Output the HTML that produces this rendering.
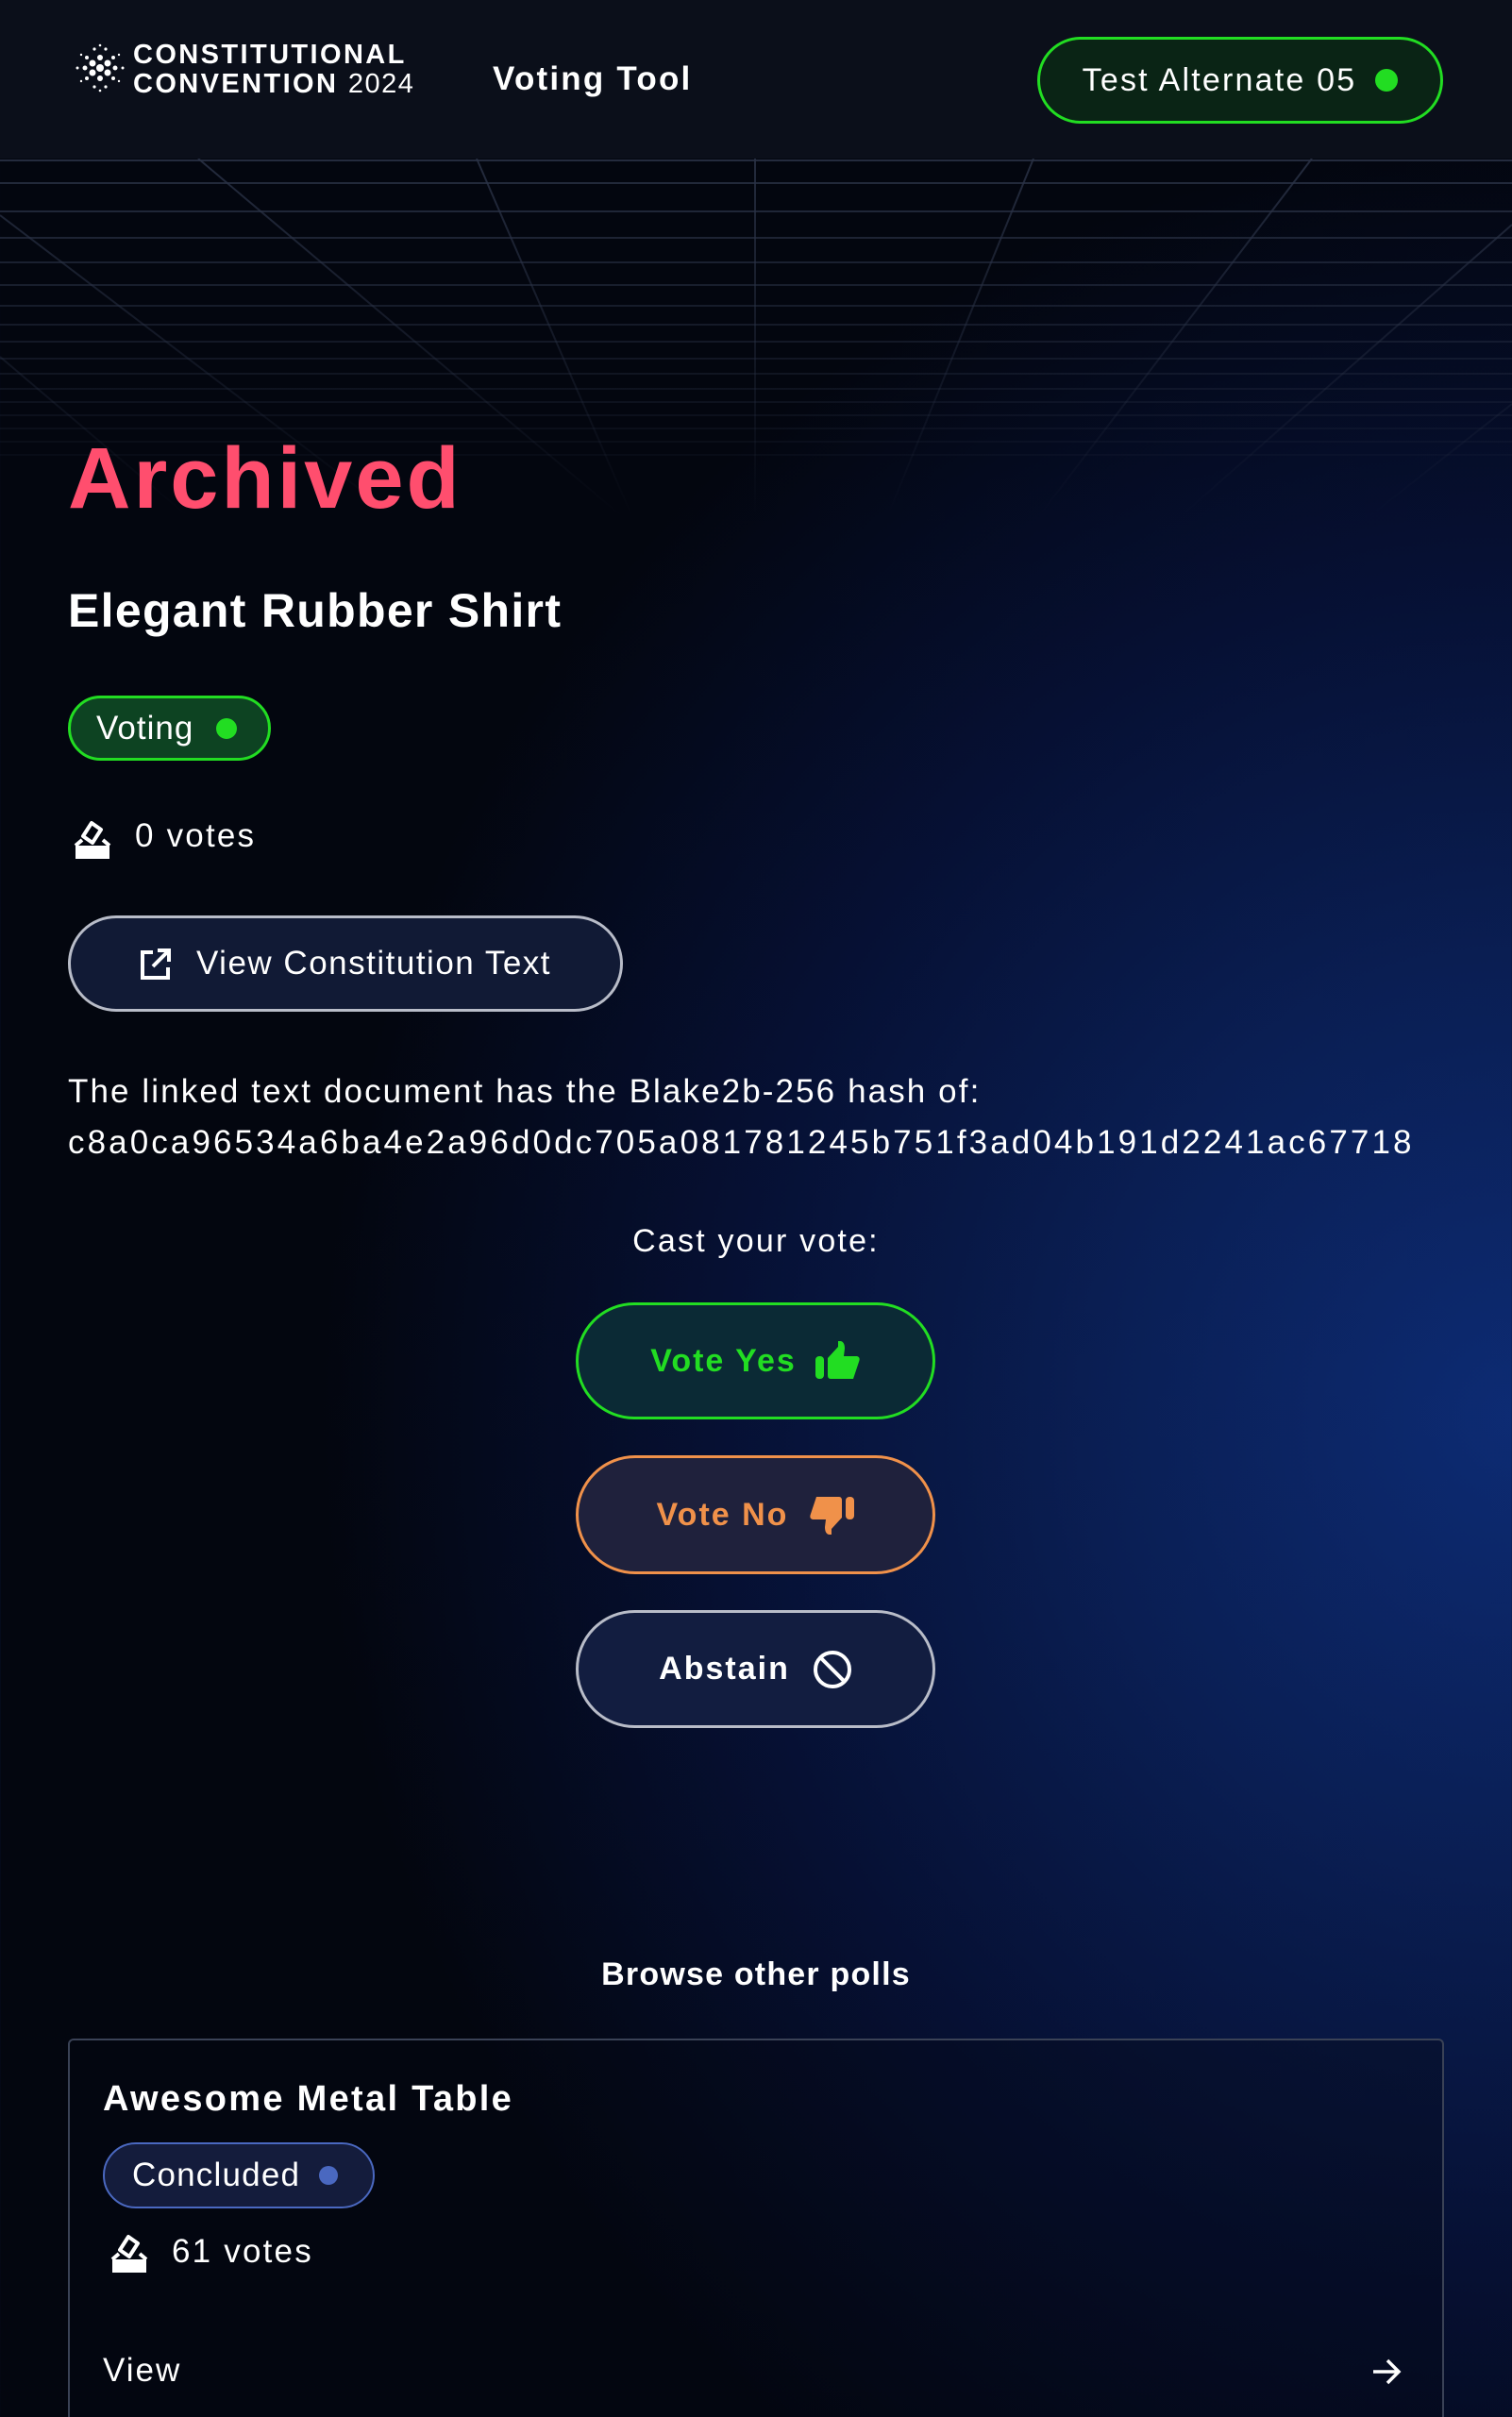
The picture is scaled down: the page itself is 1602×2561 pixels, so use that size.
<!DOCTYPE html>
<html><head><meta charset="utf-8">
<style>
*{margin:0;padding:0;box-sizing:border-box}
html,body{width:1602px;height:2561px;overflow:hidden}
body{font-family:"Liberation Sans",sans-serif;color:#fff;position:relative;
background:radial-gradient(ellipse 1400px 1500px at 1602px 1500px,#0d2b73 0%,#0a1f55 30%,#061033 60%,#03060f 90%),#03060f;}
.hdr{position:absolute;left:0;top:0;width:1602px;height:168px;background:#0b0f1a;}
.grid{position:absolute;left:0;top:168px;width:1602px;height:380px;}
.abs{position:absolute}
.pill{position:absolute;border-radius:999px;display:flex;align-items:center;justify-content:center}
</style></head><body>
<div class="hdr"></div>
<svg class="grid" width="1602" height="380" viewBox="0 0 1602 380">
<defs><linearGradient id="fg" gradientUnits="userSpaceOnUse" x1="0" y1="0" x2="0" y2="380"><stop offset="0" stop-color="#2a3246" stop-opacity=".85"/><stop offset="0.85" stop-color="#2a3246" stop-opacity="0.12"/><stop offset="1" stop-color="#2a3246" stop-opacity="0"/></linearGradient></defs>
<g stroke="url(#fg)" stroke-width="2" fill="none">
<line x1="0" y1="2" x2="1602" y2="2"/><line x1="0" y1="26" x2="1602" y2="26"/><line x1="0" y1="56" x2="1602" y2="56"/><line x1="0" y1="84" x2="1602" y2="84"/><line x1="0" y1="110" x2="1602" y2="110"/><line x1="0" y1="134" x2="1602" y2="134"/><line x1="0" y1="156" x2="1602" y2="156"/><line x1="0" y1="176" x2="1602" y2="176"/><line x1="0" y1="194" x2="1602" y2="194"/><line x1="0" y1="212" x2="1602" y2="212"/><line x1="0" y1="228" x2="1602" y2="228"/><line x1="0" y1="244" x2="1602" y2="244"/><line x1="0" y1="258" x2="1602" y2="258"/><line x1="0" y1="272" x2="1602" y2="272"/><line x1="0" y1="286" x2="1602" y2="286"/><line x1="0" y1="300" x2="1602" y2="300"/><line x1="0" y1="314" x2="1602" y2="314"/>
<line x1="210" y1="0" x2="660" y2="380"/><line x1="505" y1="0" x2="670" y2="380"/><line x1="800" y1="0" x2="800" y2="380"/><line x1="1095" y1="0" x2="940" y2="380"/><line x1="1390" y1="0" x2="1100" y2="380"/><line x1="1602" y1="70" x2="1250" y2="380"/><line x1="0" y1="60" x2="420" y2="380"/><line x1="0" y1="210" x2="200" y2="380"/><line x1="1602" y1="260" x2="1450" y2="380"/>
</g></svg>
<svg class="abs" style="left:78px;top:44px" width="56" height="56" viewBox="0 0 56 56" fill="#fff">
<circle cx="28" cy="28" r="4"/><circle cx="20" cy="23" r="3.5"/><circle cx="36" cy="23" r="3.5"/><circle cx="20" cy="33" r="3.5"/><circle cx="36" cy="33" r="3.5"/><circle cx="28" cy="17" r="3"/><circle cx="28" cy="39" r="3"/><circle cx="12" cy="28" r="2.5"/><circle cx="44" cy="28" r="2.5"/><circle cx="14" cy="17" r="2"/><circle cx="42" cy="17" r="2"/><circle cx="14" cy="39" r="2"/><circle cx="42" cy="39" r="2"/><circle cx="22" cy="8" r="1.6"/><circle cx="34" cy="8" r="1.6"/><circle cx="22" cy="48" r="1.6"/><circle cx="34" cy="48" r="1.6"/><circle cx="4" cy="28" r="1.5"/><circle cx="52" cy="28" r="1.5"/><circle cx="28" cy="4" r="1.3"/><circle cx="28" cy="52" r="1.3"/><circle cx="8" cy="14" r="1.2"/><circle cx="48" cy="14" r="1.2"/><circle cx="8" cy="42" r="1.2"/><circle cx="48" cy="42" r="1.2"/>
</svg>
<div class="abs" style="left:141px;top:43px;font-size:29px;line-height:31px;font-weight:bold;letter-spacing:2.4px">CONSTITUTIONAL<br>CONVENTION <span style="font-weight:normal;letter-spacing:1.5px">2024</span></div>
<div class="abs" style="left:522px;top:64px;font-size:35px;font-weight:bold;letter-spacing:2.2px">Voting Tool</div>
<div class="pill" style="left:1099px;top:39px;width:430px;height:92px;border:3px solid #22dd22;background:#0a2415;font-size:34px;letter-spacing:2.2px">Test Alternate 05<span style="display:inline-block;width:24px;height:24px;border-radius:50%;background:#22dd22;margin-left:20px"></span></div>

<div class="abs" style="left:72px;top:455px;font-size:92px;font-weight:bold;color:#ff4e6e;letter-spacing:3px">Archived</div>
<div class="abs" style="left:72px;top:618px;font-size:50px;font-weight:bold;letter-spacing:1.3px">Elegant Rubber Shirt</div>
<div class="pill" style="left:72px;top:737px;width:215px;height:69px;border:3px solid #22dd22;background:#0d4322;font-size:35px;justify-content:flex-start;padding-left:27px;letter-spacing:1px">Voting<span style="display:inline-block;width:22px;height:22px;border-radius:50%;background:#22dd22;margin-left:24px"></span></div>
<svg class="abs" style="left:77px;top:866px" width="42" height="46" viewBox="0 0 42 46"><path d="M11 20 L20 6 L30 13 L21 27 Z" fill="none" stroke="#fff" stroke-width="4" stroke-linejoin="round"/><path d="M3 30 h36 v14 h-36z" fill="#fff"/><path d="M3 30 l7-6 M39 30 l-7-6" stroke="#fff" stroke-width="4"/></svg>
<div class="abs" style="left:143px;top:866px;font-size:35px;letter-spacing:2.2px">0 votes</div>
<div class="pill" style="left:72px;top:970px;width:588px;height:102px;border:3px solid #b8bcc8;background:#111a35;font-size:35px;letter-spacing:1.5px"><svg width="34" height="36" viewBox="0 0 34 36" style="margin-right:26px"><path d="M14 6 H3 V33 H30 V22 M19 4 H31 V16 M31 4 L14 21" fill="none" stroke="#fff" stroke-width="4"/></svg>View Constitution Text</div>

<div class="abs" style="left:72px;top:1130px;font-size:35px;line-height:54px;"><span style="letter-spacing:2.1px">The linked text document has the Blake2b-256 hash of:</span><br><span style="letter-spacing:3.1px">c8a0ca96534a6ba4e2a96d0dc705a081781245b751f3ad04b191d2241ac67718</span></div>

<div class="abs" style="left:0;width:1602px;text-align:center;top:1296px;font-size:34px;letter-spacing:2.2px">Cast your vote:</div>
<div class="pill" style="left:610px;top:1380px;width:381px;height:124px;border:3px solid #22dd22;background:#0b2a35;color:#22dd22;font-size:34px;font-weight:bold;letter-spacing:2px">Vote Yes<svg width="48" height="42" viewBox="0 0 48 42" style="margin-left:20px"><rect x="0" y="16" width="9" height="24" rx="4" fill="#22dd22"/><path d="M13 18 L24 6 L24 0 Q31 -1 31 8 L30 16 H44 Q48 17 46 22 L40 40 H16 Q13 40 13 36 Z" fill="#22dd22"/></svg></div>
<div class="pill" style="left:610px;top:1542px;width:381px;height:126px;border:3px solid #f0914a;background:#1f213c;color:#f0914a;font-size:34px;font-weight:bold;letter-spacing:2px">Vote No<svg width="48" height="42" viewBox="0 0 48 42" style="margin-left:22px;transform:scaleY(-1)"><rect x="39" y="16" width="9" height="24" rx="4" fill="#f0914a"/><path d="M35 18 L24 6 L24 0 Q17 -1 17 8 L18 16 H4 Q0 17 2 22 L8 40 H32 Q35 40 35 36 Z" fill="#f0914a"/></svg></div>
<div class="pill" style="left:610px;top:1706px;width:381px;height:125px;border:3px solid #b8bcc8;background:#121d40;font-size:34px;font-weight:bold;letter-spacing:2px">Abstain<svg width="42" height="42" viewBox="0 0 42 42" style="margin-left:24px"><circle cx="21" cy="21" r="18" fill="none" stroke="#fff" stroke-width="4"/><path d="M9 9 L33 33" stroke="#fff" stroke-width="4"/></svg></div>

<div class="abs" style="left:0;width:1602px;text-align:center;top:2073px;font-size:34px;font-weight:bold;letter-spacing:1.2px">Browse other polls</div>
<div class="abs" style="left:72px;top:2160px;width:1458px;height:440px;border:2px solid #3a4256;border-radius:6px;background:rgba(5,8,20,.35)"></div>
<div class="abs" style="left:109px;top:2203px;font-size:38px;font-weight:bold;letter-spacing:2.3px">Awesome Metal Table</div>
<div class="pill" style="left:109px;top:2270px;width:288px;height:70px;border:2px solid #4a68c0;background:#141c3c;font-size:35px;justify-content:flex-start;padding-left:29px;letter-spacing:1.2px">Concluded<span style="display:inline-block;width:20px;height:20px;border-radius:50%;background:#4a68c0;margin-left:20px"></span></div>
<svg class="abs" style="left:116px;top:2364px" width="42" height="46" viewBox="0 0 42 46"><path d="M11 20 L20 6 L30 13 L21 27 Z" fill="none" stroke="#fff" stroke-width="4" stroke-linejoin="round"/><path d="M3 30 h36 v14 h-36z" fill="#fff"/><path d="M3 30 l7-6 M39 30 l-7-6" stroke="#fff" stroke-width="4"/></svg>
<div class="abs" style="left:182px;top:2366px;font-size:35px;letter-spacing:2.2px">61 votes</div>
<div class="abs" style="left:109px;top:2492px;font-size:35px;letter-spacing:2px">View</div>
<svg class="abs" style="left:1452px;top:2496px" width="34" height="34" viewBox="0 0 34 34"><path d="M3 17 H30 M18 5 L30 17 L18 29" fill="none" stroke="#fff" stroke-width="3.5"/></svg>
</body></html>
